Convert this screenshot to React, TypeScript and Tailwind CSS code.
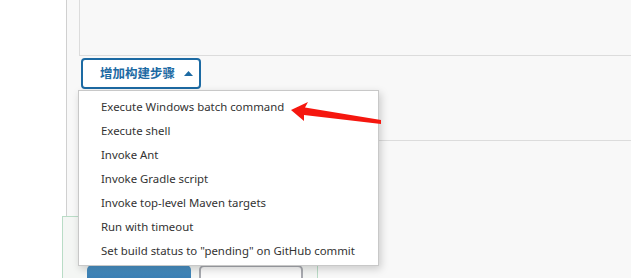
import React from "react";

const items = [
  "Execute Windows batch command",
  "Execute shell",
  "Invoke Ant",
  "Invoke Gradle script",
  "Invoke top-level Maven targets",
  "Run with timeout",
  'Set build status to "pending" on GitHub commit',
];

export default function App() {
  return (
    <div
      className="relative w-[631px] h-[278px] overflow-hidden bg-white flex"
      style={{ fontFamily: '"Noto Sans", "Noto Sans CJK SC", sans-serif' }}
    >
      <div className="w-[66px] shrink-0 bg-white" />
      <div className="flex-1 border-l border-[#d0d0d0] bg-[#f8f8f8] pl-[12px] flex flex-col">
        <div className="h-[56px] border-l border-b border-[#dcdcdc] bg-[#f8f8f8]" />
        <div className="relative h-[85px] border-b border-[#dcdcdc] pt-[2px] pl-[2px]">
          <button className="h-[31px] w-[120px] rounded-[4px] border-2 border-[#1c6aa3] bg-white flex items-center pl-[17px] gap-[9px] text-[12.5px] font-bold text-[#1c6aa3]">
            <span style={{ fontFamily: '"Noto Sans CJK SC", sans-serif' }}>增加构建步骤</span>
            <svg width="9" height="5" viewBox="0 0 9 5">
              <polygon points="0,5 9,5 4.5,0" fill="#1c6aa3" />
            </svg>
          </button>
        </div>
        <div className="flex-1" />
      </div>

      {/* sticky bottom bar */}
      <div className="absolute left-[62px] top-[216px] w-[256px] h-[70px] border border-[#b9dcc6] bg-[#f4f6f4]">
        <div className="absolute left-[24px] top-[48px] w-[104px] h-[24px] rounded-[5px] bg-gradient-to-b from-[#4b93c6] to-[#2a6ea3]" />
        <div className="absolute left-[136px] top-[48px] w-[104px] h-[24px] rounded-[5px] border-2 border-[#a8aab0] bg-[#fbfbfb]" />
      </div>

      {/* dropdown menu */}
      <div className="absolute left-[78px] top-[90px] w-[301px] h-[176px] border border-[#c8c8c8] bg-white shadow-[2px_3px_8px_rgba(0,0,0,0.18)] pt-[4px]">
        {items.map((t) => (
          <div key={t} className="h-[24px] pl-[22px] flex items-center text-[11.4px] text-[#333]">
            {t}
          </div>
        ))}
      </div>

      {/* red arrow */}
      <svg className="absolute left-0 top-0" width="631" height="278" viewBox="0 0 631 278">
        <polygon
          points="291,110 308,102 305,107.5 381,120 381,124 304,115 304,121"
          fill="#f5170f"
        />
      </svg>
    </div>
  );
}
